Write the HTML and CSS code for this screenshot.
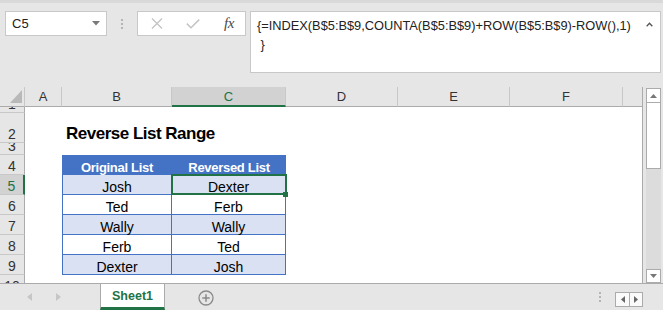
FILE: index.html
```html
<!DOCTYPE html>
<html>
<head>
<meta charset="utf-8">
<title>Reverse List Range</title>
<link rel="stylesheet" href="styles.css">
</head>
<body>
<div class="app">
  <div class="topstrip"></div>
  <div class="fbar">
    <div class="namebox">
      <span class="nb-text">C5</span>
      <svg class="nb-arrow" width="8" height="5" viewBox="0 0 8 5"><path d="M0 0H8L4 4.5Z" fill="#7a7a7a"/></svg>
    </div>
    <div class="grip"><i></i><i></i><i></i></div>
    <div class="fxbox">
      <svg class="ic-x" width="12" height="11" viewBox="0 0 12 11"><path d="M1 0.5L11 10.5M11 0.5L1 10.5" stroke="#c4c4c4" stroke-width="1.3" fill="none"/></svg>
      <svg class="ic-check" width="14" height="10" viewBox="0 0 14 10"><path d="M0.8 4.6L5 8.8L13.2 0.6" stroke="#c4c4c4" stroke-width="1.5" fill="none"/></svg>
      <span class="fx">fx</span>
    </div>
    <div class="finput">
      <div class="ftext">{=INDEX(B$5:B$9,COUNTA(B$5:B$9)+ROW(B$5:B$9)-ROW(),1)
 }</div>
      <svg class="caret" width="7" height="5" viewBox="0 0 7 5"><path d="M0.7 4.2L3.5 1.2L6.3 4.2" stroke="#555" stroke-width="1.3" fill="none"/></svg>
    </div>
  </div>

  <div class="main">
    <div class="grid">
      <!-- column headers -->
      <div class="corner"><svg width="24" height="19" viewBox="0 0 24 19"><path d="M10 16H22V3Z" fill="#b9b9b9"/></svg></div>
      <div class="ch">A</div>
      <div class="ch">B</div>
      <div class="ch sel">C</div>
      <div class="ch">D</div>
      <div class="ch">E</div>
      <div class="ch">F</div>
      <div class="ch last"></div>

      <!-- row 1 -->
      <div class="rh">1</div>
      <div></div><div></div><div></div><div></div><div></div><div></div><div></div>

      <!-- row 2 -->
      <div class="rh">2</div>
      <div></div>
      <div class="title">Reverse List Range</div>
      <div></div><div></div><div></div><div></div><div></div>

      <!-- row 3 -->
      <div class="rh">3</div>
      <div></div><div></div><div></div><div></div><div></div><div></div><div></div>

      <!-- row 4 -->
      <div class="rh">4</div>
      <div></div>
      <div class="th">Original List</div>
      <div class="th">Reversed List</div>
      <div></div><div></div><div></div><div></div>

      <!-- row 5 -->
      <div class="rh sel">5</div>
      <div></div>
      <div class="td b band">Josh</div>
      <div class="td band active">Dexter</div>
      <div></div><div></div><div></div><div></div>

      <!-- row 6 -->
      <div class="rh">6</div>
      <div></div>
      <div class="td b">Ted</div>
      <div class="td">Ferb</div>
      <div></div><div></div><div></div><div></div>

      <!-- row 7 -->
      <div class="rh">7</div>
      <div></div>
      <div class="td b band">Wally</div>
      <div class="td band">Wally</div>
      <div></div><div></div><div></div><div></div>

      <!-- row 8 -->
      <div class="rh">8</div>
      <div></div>
      <div class="td b">Ferb</div>
      <div class="td">Ted</div>
      <div></div><div></div><div></div><div></div>

      <!-- row 9 -->
      <div class="rh">9</div>
      <div></div>
      <div class="td b band">Dexter</div>
      <div class="td band">Josh</div>
      <div></div><div></div><div></div><div></div>

      <!-- row 10 -->
      <div class="rh">10</div>
      <div></div><div></div><div></div><div></div><div></div><div></div><div></div>
    </div>

    <div class="vscroll">
      <div class="vbtn up"><svg width="7" height="4" viewBox="0 0 7 4"><path d="M0 4H7L3.5 0Z" fill="#777"/></svg></div>
      <div class="thumb"></div>
      <div class="track"></div>
      <div class="vbtn down"><svg width="7" height="4" viewBox="0 0 7 4"><path d="M0 0H7L3.5 4Z" fill="#777"/></svg></div>
    </div>
  </div>

  <div class="tabbar">
    <div class="tabnav">
      <svg class="nav-left" width="5" height="8" viewBox="0 0 5 8"><path d="M5 0V8L0 4Z" fill="#c6c6c6"/></svg>
      <svg class="nav-right" width="5" height="8" viewBox="0 0 5 8"><path d="M0 0V8L5 4Z" fill="#c6c6c6"/></svg>
    </div>
    <div class="tab">Sheet1</div>
    <svg class="addsheet" width="16" height="16" viewBox="0 0 16 16"><circle cx="8" cy="8" r="7" stroke="#8a8a8a" stroke-width="1.3" fill="none"/><path d="M8 4.3V11.7M4.3 8H11.7" stroke="#8a8a8a" stroke-width="1.5"/></svg>
    <div class="spacer"></div>
    <div class="grip2"><i></i><i></i><i></i></div>
    <div class="hbtns">
      <div class="hbtn"><svg width="4" height="7" viewBox="0 0 4 7"><path d="M4 0V7L0 3.5Z" fill="#666"/></svg></div>
      <div class="hbtn"><svg width="4" height="7" viewBox="0 0 4 7"><path d="M0 0V7L4 3.5Z" fill="#666"/></svg></div>
    </div>
  </div>
</div>
</body>
</html>
```

FILE: styles.css
```css
* { box-sizing: border-box; }

html, body {
  margin: 0;
  padding: 0;
}

body {
  width: 663px;
  height: 310px;
  overflow: hidden;
  background: #e6e6e6;
  font-family: "Liberation Sans", Arial, sans-serif;
  color: #222;
}

.app {
  width: 663px;
  height: 310px;
  display: flex;
  flex-direction: column;
}

.topstrip {
  height: 3px;
  background: #d9d9d9;
}

/* ---------- formula bar ---------- */
.fbar {
  height: 84px;
  padding-top: 8px;
  display: flex;
  align-items: flex-start;
}

.namebox {
  margin-left: 5px;
  width: 102px;
  height: 25px;
  background: #fff;
  border: 1px solid #c8c8c8;
  display: flex;
  align-items: center;
  justify-content: space-between;
  padding: 0 6px 0 6px;
}

.nb-text {
  font-size: 13px;
  color: #222;
}

.nb-arrow {
  display: block;
}

.grip {
  width: 30px;
  height: 25px;
  display: flex;
  flex-direction: column;
  align-items: center;
  justify-content: center;
  gap: 2px;
}

.grip i, .grip2 i {
  display: block;
  width: 2px;
  height: 2px;
  background: #b4b4b4;
}

.fxbox {
  width: 109px;
  height: 25px;
  background: #fff;
  border: 1px solid #c8c8c8;
  display: flex;
  align-items: center;
  padding-left: 13px;
}

.ic-x { display: block; }

.ic-check {
  display: block;
  margin-left: 23px;
}

.fx {
  margin-left: 24px;
  font-family: "Liberation Serif", "Times New Roman", serif;
  font-style: italic;
  font-size: 15px;
  color: #4a4a4a;
  letter-spacing: -0.5px;
  line-height: 1;
}

.finput {
  margin-left: 4px;
  width: 411px;
  height: 62px;
  background: #fff;
  border: 1px solid #c8c8c8;
  display: flex;
  align-items: flex-start;
  padding: 4px 6px 0 6px;
}

.ftext {
  flex: 1;
  white-space: pre;
  font-size: 12.8px;
  line-height: 19px;
  color: #222;
}

.caret {
  display: block;
  margin-top: 6px;
  margin-right: 1px;
}

/* ---------- sheet ---------- */
.main {
  height: 196px;
  display: flex;
  align-items: flex-start;
}

.grid {
  width: 643px;
  height: 196px;
  overflow: hidden;
  background: #fff;
  border-right: 1px solid #ababab;
  display: grid;
  grid-template-columns: 25px 37px 110px 114px 112px 112px 113px 19px;
  grid-template-rows: 20px 6px 30px 12px 20px repeat(6, 20px);
}

.corner {
  background: #e6e6e6;
  border-right: 1px solid #c8c8c8;
  border-bottom: 1px solid #ababab;
}

.corner svg { display: block; }

.ch {
  background: #e6e6e6;
  border-right: 1px solid #c8c8c8;
  border-bottom: 1px solid #ababab;
  display: flex;
  align-items: center;
  justify-content: center;
  font-size: 13px;
  color: #333;
}

.ch.last { border-right: none; }

.ch.sel {
  background: #d2d2d2;
  color: #217346;
  border-bottom: 2px solid #217346;
}

.rh {
  background: #e6e6e6;
  border-right: 1px solid #ababab;
  border-bottom: 1px solid #c8c8c8;
  display: flex;
  align-items: flex-end;
  justify-content: center;
  overflow: hidden;
  font-size: 14px;
  line-height: 16px;
  color: #333;
}

.rh.sel {
  background: #d2d2d2;
  color: #217346;
  border-right: 2px solid #217346;
}

.title {
  display: flex;
  align-items: flex-end;
  padding: 0 0 1px 4px;
  white-space: nowrap;
  font-size: 17px;
  letter-spacing: -0.5px;
  line-height: 16px;
  font-weight: bold;
  color: #000;
}

.th {
  background: #4472c4;
  color: #fff;
  font-weight: bold;
  font-size: 13px;
  letter-spacing: -0.3px;
  line-height: 13px;
  display: flex;
  align-items: flex-end;
  justify-content: center;
  padding-bottom: 1px;
}

.td {
  border-right: 1px solid #4472c4;
  border-bottom: 1px solid #4472c4;
  display: flex;
  align-items: flex-end;
  justify-content: center;
  font-size: 14px;
  line-height: 14px;
  color: #000;
}

.td.b { border-left: 1px solid #4472c4; }

.td.band { background: #d9e1f2; }

.td.active { position: relative; }

.td.active::after {
  content: "";
  position: absolute;
  top: -1px;
  left: -1px;
  right: -2px;
  bottom: -1px;
  border: 2px solid #217346;
}

.td.active::before {
  content: "";
  position: absolute;
  right: -3px;
  bottom: -3px;
  width: 5px;
  height: 5px;
  background: #217346;
  z-index: 2;
}

/* ---------- vertical scrollbar ---------- */
.vscroll {
  margin-left: 3px;
  margin-top: 1px;
  width: 15px;
  height: 195px;
  background: #dcdcdc;
  display: flex;
  flex-direction: column;
}

.vbtn {
  height: 15px;
  background: #fff;
  border: 1px solid #ababab;
  display: flex;
  align-items: center;
  justify-content: center;
}

.vbtn svg { display: block; }

.vbtn.down { height: 14px; }

.thumb {
  height: 66px;
  background: #fff;
  border: 1px solid #ababab;
  border-top: none;
}

.track { flex: 1; }

/* ---------- sheet tabs ---------- */
.tabbar {
  height: 27px;
  border-top: 1px solid #ababab;
  display: flex;
  align-items: stretch;
  background: #e6e6e6;
}

.tabnav {
  width: 100px;
  display: flex;
  align-items: center;
  padding-left: 27px;
}

.tabnav svg { display: block; }

.nav-right { margin-left: 24px; }

.tab {
  width: 65px;
  background: #fff;
  border-left: 1px solid #ababab;
  border-right: 1px solid #ababab;
  border-bottom: 3px solid #217346;
  display: flex;
  align-items: center;
  justify-content: center;
  padding-top: 1px;
  font-weight: bold;
  font-size: 12.5px;
  color: #217346;
}

.addsheet {
  display: block;
  align-self: center;
  margin-left: 33px;
  margin-top: 2px;
}

.spacer { flex: 1; }

.grip2 {
  display: flex;
  flex-direction: column;
  justify-content: center;
  gap: 2px;
  margin-right: 14px;
}

.hbtns {
  align-self: flex-start;
  margin-top: 8px;
  margin-right: 20px;
  display: flex;
  border: 1px solid #ababab;
  background: #fafafa;
}

.hbtn {
  width: 13px;
  height: 13px;
  display: flex;
  align-items: center;
  justify-content: center;
}

.hbtn + .hbtn { border-left: 1px solid #ababab; }

.hbtn svg { display: block; }
```
